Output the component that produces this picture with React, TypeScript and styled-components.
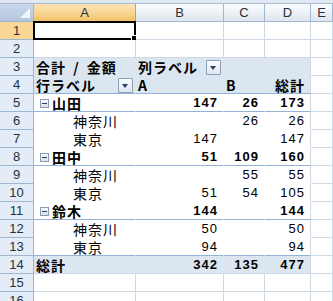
import React from 'react';
import styled, { createGlobalStyle, css } from 'styled-components';

const GlobalStyle = createGlobalStyle`
  html, body {
    margin: 0;
    padding: 0;
    background: #ffffff;
    overflow: hidden;
  }
`;

type Tone = 'grid' | 'pivot' | 'head' | 'total';

type PivotRow = {
  label: string;
  level: 'group' | 'item' | 'total';
  values: [string, string, string];
};

const COLUMNS = ['A', 'B', 'C', 'D', 'E'];

const body: PivotRow[] = [
  { label: '山田', level: 'group', values: ['147', '26', '173'] },
  { label: '神奈川', level: 'item', values: ['', '26', '26'] },
  { label: '東京', level: 'item', values: ['147', '', '147'] },
  { label: '田中', level: 'group', values: ['51', '109', '160'] },
  { label: '神奈川', level: 'item', values: ['', '55', '55'] },
  { label: '東京', level: 'item', values: ['51', '54', '105'] },
  { label: '鈴木', level: 'group', values: ['144', '', '144'] },
  { label: '神奈川', level: 'item', values: ['50', '', '50'] },
  { label: '東京', level: 'item', values: ['94', '', '94'] },
  { label: '総計', level: 'total', values: ['342', '135', '477'] },
];

const GRID = '#d0d7e5';
const FRAME = '#9eb6ce';
const PIVOT_FILL = '#dce6f1';
const PIVOT_RULE = '#95b3d7';

const tones = {
  grid: { bg: '#ffffff', side: GRID, under: GRID },
  pivot: { bg: '#ffffff', side: '#ffffff', under: '#ffffff' },
  head: { bg: PIVOT_FILL, side: PIVOT_FILL, under: PIVOT_FILL },
  total: { bg: PIVOT_FILL, side: PIVOT_FILL, under: GRID },
};

const Sheet = styled.div`
  display: grid;
  grid-template-columns: 34px 102px 88px 41px 46px 1fr;
  grid-template-rows: 4px 18px;
  grid-auto-rows: 18px;
  width: 333px;
  height: 301px;
  overflow: hidden;
  font-family: 'Noto Sans CJK JP', 'Liberation Sans', sans-serif;
  color: #000;
`;

const Strip = styled.div`
  grid-column: 1 / -1;
  box-sizing: border-box;
  background: #dfe7f1;
  border-bottom: 1px solid #a7bcd4;
`;

const Corner = styled.div`
  position: relative;
  box-sizing: border-box;
  background: linear-gradient(#c9d7e9, #b4c7df);
  border-right: 1px solid ${FRAME};
  border-bottom: 1px solid ${FRAME};

  &::after {
    content: '';
    position: absolute;
    right: 3px;
    bottom: 3px;
    border-left: 10px solid transparent;
    border-bottom: 10px solid #f2f6fb;
  }
`;

const ColHead = styled.div<{ $active?: boolean }>`
  box-sizing: border-box;
  display: flex;
  align-items: center;
  justify-content: center;
  padding-top: 1px;
  font-family: 'Liberation Sans', sans-serif;
  font-size: 13px;
  line-height: 16px;
  color: #27313f;
  background: linear-gradient(#f9fbfd 0%, #eef2f7 50%, #dfe5ee 100%);
  border-right: 1px solid ${FRAME};
  border-bottom: 1px solid ${FRAME};

  ${(p) =>
    p.$active &&
    css`
      background: linear-gradient(#fbe3b4 0%, #f8d597 50%, #f2c267 100%);
      border-right-color: #f29436;
      border-bottom-color: #f29436;
    `}
`;

const RowHead = styled.div<{ $active?: boolean }>`
  box-sizing: border-box;
  display: flex;
  align-items: center;
  justify-content: center;
  padding-top: 1px;
  font-family: 'Liberation Sans', sans-serif;
  font-size: 13px;
  line-height: 16px;
  color: #27313f;
  background: #e4ecf7;
  border-right: 1px solid ${FRAME};
  border-bottom: 1px solid ${FRAME};

  ${(p) =>
    p.$active &&
    css`
      background: #fbd796;
      border-right-color: #f29436;
    `}
`;

const Cell = styled.div<{
  $tone?: Tone;
  $bold?: boolean;
  $right?: boolean;
  $indent?: number;
  $rule?: boolean;
  $edge?: boolean;
}>`
  position: relative;
  box-sizing: border-box;
  display: flex;
  align-items: center;
  justify-content: ${(p) => (p.$right ? 'flex-end' : 'flex-start')};
  padding: 1px ${(p) => (p.$right ? 5 : 2)}px 0 ${(p) => p.$indent ?? 2}px;
  white-space: nowrap;
  font-size: 14px;
  line-height: 16px;
  letter-spacing: 1px;
  word-spacing: 3px;
  font-weight: ${(p) => (p.$bold ? 700 : 400)};
  background: ${(p) => tones[p.$tone ?? 'grid'].bg};
  border-right: 1px solid
    ${(p) => (p.$edge ? GRID : tones[p.$tone ?? 'grid'].side)};
  border-bottom: 1px solid
    ${(p) => (p.$rule ? PIVOT_RULE : tones[p.$tone ?? 'grid'].under)};
`;

const Num = styled.span`
  font-family: 'Liberation Sans', sans-serif;
  font-size: 13px;
  letter-spacing: 1px;
`;

const Selection = styled.div`
  position: absolute;
  top: -1px;
  left: -1px;
  right: -1px;
  bottom: -1px;
  border: 2px solid #000;
  pointer-events: none;

  &::after {
    content: '';
    position: absolute;
    right: -4px;
    bottom: -4px;
    width: 5px;
    height: 5px;
    background: #000;
    border: 1px solid #fff;
  }
`;

const FilterButton = styled.span`
  position: relative;
  display: inline-block;
  flex: none;
  box-sizing: border-box;
  width: 15px;
  height: 15px;
  margin-left: auto;
  border: 1px solid #8d9fb8;
  border-radius: 1px;
  background: linear-gradient(#fbfcfe, #dfe6f0);

  &::after {
    content: '';
    position: absolute;
    left: 3px;
    top: 5px;
    border-left: 3.5px solid transparent;
    border-right: 3.5px solid transparent;
    border-top: 4px solid #2b3f66;
  }
`;

const InlineFilter = styled(FilterButton)`
  margin-left: 8px;
`;

const Toggle = styled.span`
  position: relative;
  display: inline-block;
  flex: none;
  box-sizing: border-box;
  width: 9px;
  height: 9px;
  margin: 0 3px 0 6px;
  border: 1px solid #8a9bb3;
  background: linear-gradient(#f7f9fc, #d9e1ec);

  &::after {
    content: '';
    position: absolute;
    left: 1px;
    right: 1px;
    top: 3px;
    height: 1px;
    background: #2b3f66;
  }
`;

const blankRow = (n: number, active = false) => (
  <React.Fragment key={n}>
    <RowHead $active={active}>{n}</RowHead>
    <Cell>{active && <Selection />}</Cell>
    <Cell />
    <Cell />
    <Cell />
    <Cell />
  </React.Fragment>
);

const value = (v: string) => (v ? <Num>{v}</Num> : null);

export default function App() {
  return (
    <>
      <GlobalStyle />
      <Sheet>
        <Strip />
        <Corner />
        {COLUMNS.map((c) => (
          <ColHead key={c} $active={c === 'A'}>
            {c}
          </ColHead>
        ))}

        {blankRow(1, true)}
        {blankRow(2)}

        <RowHead>3</RowHead>
        <Cell $tone="head" $bold>
          合計 / 金額
        </Cell>
        <Cell $tone="head" $bold>
          列ラベル
          <InlineFilter />
        </Cell>
        <Cell $tone="head" />
        <Cell $tone="head" $edge />
        <Cell />

        <RowHead>4</RowHead>
        <Cell $tone="head" $bold $rule>
          行ラベル
          <FilterButton />
        </Cell>
        <Cell $tone="head" $bold $rule>
          A
        </Cell>
        <Cell $tone="head" $bold $rule>
          B
        </Cell>
        <Cell $tone="head" $bold $rule $right $edge>
          総計
        </Cell>
        <Cell />

        {body.map((row, i) => {
          const n = i + 5;
          const tone: Tone = row.level === 'total' ? 'total' : 'pivot';
          const bold = row.level !== 'item';
          const next = body[i + 1];
          const rule = row.level === 'group' || next?.level === 'total';
          return (
            <React.Fragment key={n}>
              <RowHead>{n}</RowHead>
              <Cell
                $tone={tone}
                $bold={bold}
                $rule={rule}
                $indent={row.level === 'item' ? 39 : row.level === 'group' ? 0 : 2}
              >
                {row.level === 'group' && <Toggle />}
                {row.label}
              </Cell>
              <Cell $tone={tone} $bold={bold} $rule={rule} $right>
                {value(row.values[0])}
              </Cell>
              <Cell $tone={tone} $bold={bold} $rule={rule} $right>
                {value(row.values[1])}
              </Cell>
              <Cell $tone={tone} $bold={bold} $rule={rule} $right $edge>
                {value(row.values[2])}
              </Cell>
              <Cell />
            </React.Fragment>
          );
        })}

        {blankRow(15)}
        {blankRow(16)}
      </Sheet>
    </>
  );
}
